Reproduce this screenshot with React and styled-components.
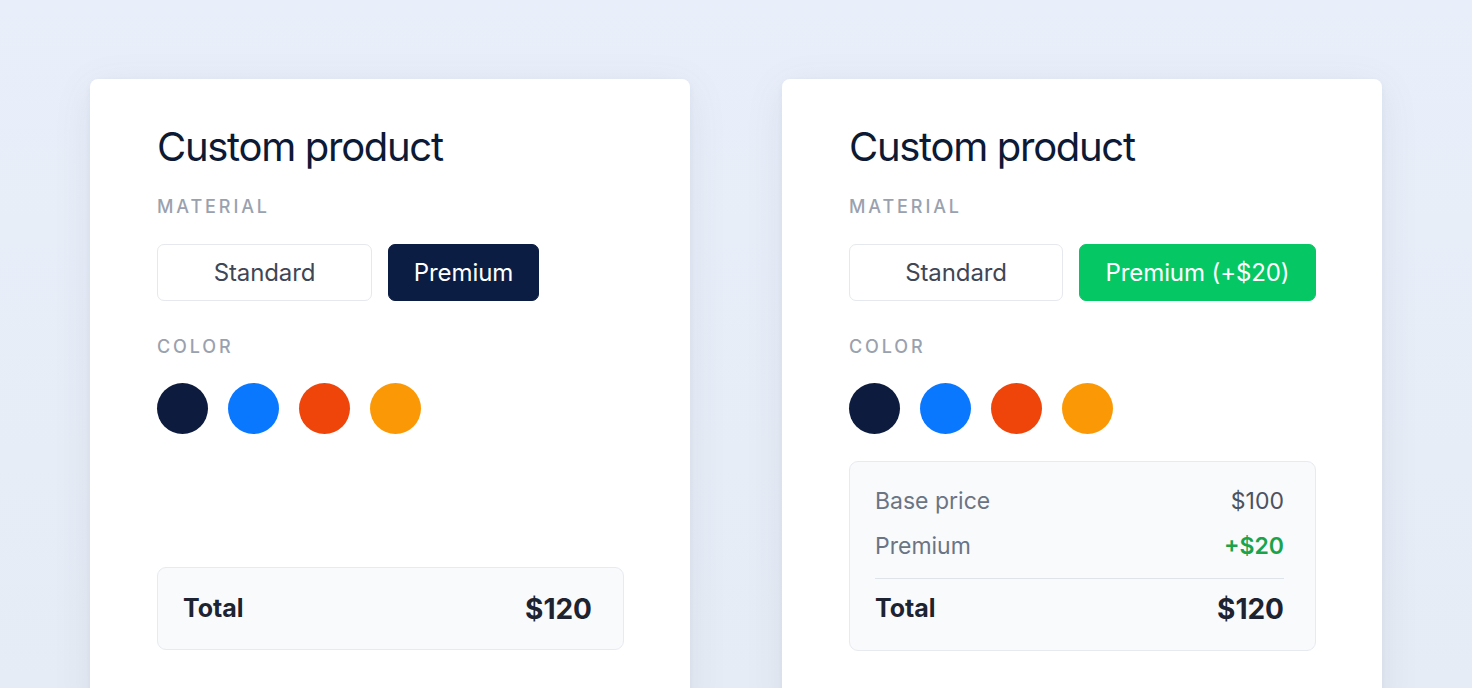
import React from "react";
import styled, { createGlobalStyle } from "styled-components";

const Global = createGlobalStyle`
  html, body { margin: 0; padding: 0; }
  body {
    background: #e9eff9;
    font-family: Inter, "Noto Sans", sans-serif;
    overflow: hidden;
  }
`;

const Page = styled.div`
  height: 688px;
  overflow: hidden;
  display: flex;
  justify-content: center;
  align-items: flex-start;
  gap: 92px;
  padding-top: 79px;
  box-sizing: border-box;
  background: linear-gradient(180deg, #e9effa 0%, #e6ecf5 100%);
`;

const Card = styled.div`
  width: 600px;
  min-height: 637px;
  flex-shrink: 0;
  box-sizing: border-box;
  background: #ffffff;
  border-radius: 8px;
  box-shadow: 0 8px 40px rgba(40, 60, 100, 0.08), 0 2px 6px rgba(40, 60, 100, 0.04);
  padding: 44px 66px 66px 67px;
  display: flex;
  flex-direction: column;
`;

const Title = styled.h1`
  margin: 0;
  font-size: 40px;
  line-height: 48px;
  font-weight: 400;
  color: #0c1a36;
  letter-spacing: -1.3px;
`;

const Label = styled.div`
  margin-top: ${(p) => p.$mt}px;
  font-size: 18px;
  line-height: 20px;
  font-weight: 500;
  letter-spacing: 2.9px;
  color: #9aa1ae;
  text-transform: uppercase;
`;

const Options = styled.div`
  display: flex;
  gap: 16px;
  margin-top: 27px;
`;

const Option = styled.button`
  height: 57px;
  width: ${(p) => p.$w}px;
  box-sizing: border-box;
  border-radius: 7px;
  font-family: Inter, "Noto Sans", sans-serif;
  font-size: 24px;
  font-weight: 400;
  letter-spacing: -0.1px;
  cursor: pointer;
  border: 1px solid ${(p) => (p.$active ? p.$bg : "#e5e8ee")};
  background: ${(p) => (p.$active ? p.$bg : "#ffffff")};
  color: ${(p) => (p.$active ? "#ffffff" : "#3f4655")};
  padding: 0;
`;

const Swatches = styled.div`
  display: flex;
  gap: 20px;
  margin-top: 26px;
`;

const Swatch = styled.div`
  width: 51px;
  height: 51px;
  border-radius: 50%;
  background: ${(p) => p.$c};
`;

const Summary = styled.div`
  margin-top: ${(p) => (p.$auto ? "auto" : "27px")};
  border: 1px solid #e7eaf0;
  background: #f8fafc;
  border-radius: 9px;
  padding: ${(p) => (p.$compact ? "25px 31px 25px 25px" : "16px 31px 15px 25px")};
  display: flex;
  flex-direction: column;
`;

const Row = styled.div`
  display: flex;
  justify-content: space-between;
  align-items: center;
  height: 45px;
  font-size: 23px;
  color: #6b7483;
`;

const Amount = styled.span`
  color: ${(p) => p.$c || "#4b5260"};
  font-weight: ${(p) => (p.$c ? 600 : 400)};
`;

const Divider = styled.div`
  height: 1px;
  background: #dfe3ea;
  margin-top: 10px;
`;

const TotalRow = styled.div`
  display: flex;
  justify-content: space-between;
  align-items: center;
  height: ${(p) => p.$h}px;
  margin-top: ${(p) => p.$mt || 0}px;
  color: #1e2332;
`;

const TotalLabel = styled.span`
  font-size: 25px;
  font-weight: 700;
  margin-top: -2px;
`;

const TotalValue = styled.span`
  font-size: 28px;
  font-weight: 700;
`;

const colors = ["#0c1b3e", "#0a77ff", "#f0450a", "#fb9806"];

function ProductCard({ premiumLabel, premiumWidth, premiumBg, breakdown }) {
  return (
    <Card>
      <Title>Custom product</Title>
      <Label $mt={26}>Material</Label>
      <Options>
        <Option $w={215}>Standard</Option>
        <Option $w={premiumWidth} $active $bg={premiumBg}>
          {premiumLabel}
        </Option>
      </Options>
      <Label $mt={36}>Color</Label>
      <Swatches>
        {colors.map((c) => (
          <Swatch key={c} $c={c} />
        ))}
      </Swatches>
      {breakdown ? (
        <Summary>
          <Row>
            <span>Base price</span>
            <Amount>$100</Amount>
          </Row>
          <Row>
            <span>Premium</span>
            <Amount $c="#1aa34a">+$20</Amount>
          </Row>
          <Divider />
          <TotalRow $h={52} $mt={4}>
            <TotalLabel>Total</TotalLabel>
            <TotalValue>$120</TotalValue>
          </TotalRow>
        </Summary>
      ) : (
        <Summary $auto $compact>
          <TotalRow $h={31}>
            <TotalLabel>Total</TotalLabel>
            <TotalValue>$120</TotalValue>
          </TotalRow>
        </Summary>
      )}
    </Card>
  );
}

export default function App() {
  return (
    <>
      <Global />
      <Page>
        <ProductCard premiumLabel="Premium" premiumWidth={151} premiumBg="#0b1d42" />
        <ProductCard
          premiumLabel="Premium (+$20)"
          premiumWidth={238}
          premiumBg="#05c865"
          breakdown
        />
      </Page>
    </>
  );
}
